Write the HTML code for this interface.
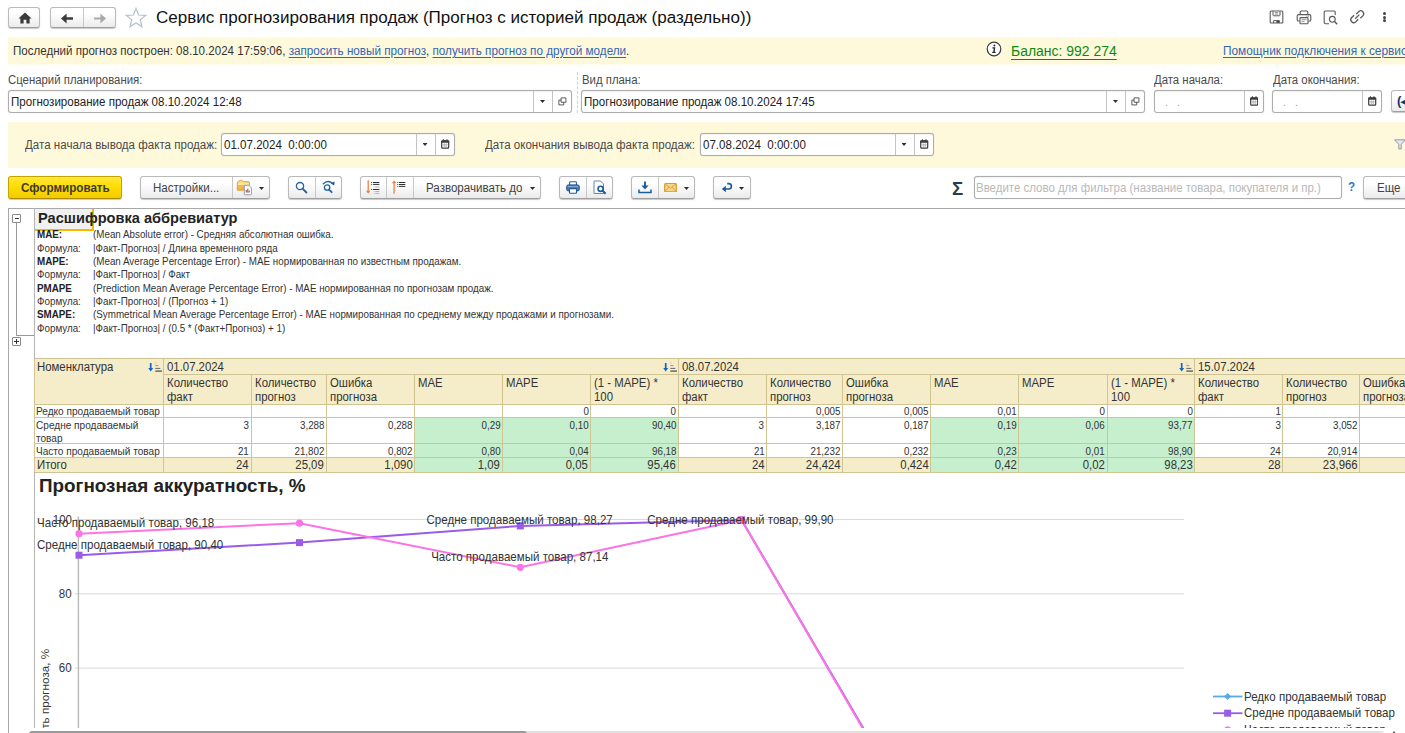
<!DOCTYPE html>
<html lang="ru">
<head>
<meta charset="utf-8">
<title>Сервис прогнозирования продаж</title>
<style>
*{box-sizing:border-box;margin:0;padding:0}
html,body{width:1405px;height:733px;overflow:hidden;background:#fff}
body{font-family:"Liberation Sans",Arial,sans-serif;font-size:11.55px;color:#333;position:relative}
.abs{position:absolute;white-space:nowrap}
.t{position:absolute;white-space:nowrap;line-height:14px;font-size:12.5px;transform:scaleX(.925);transform-origin:0 50%}
.t.s{font-size:10.9px;line-height:13px}
.t.s.n{font-size:10.6px}
.t.s.a{font-size:10.3px;transform:scaleX(.953)}
.t.m{font-size:12.3px;line-height:14px}
.tr{transform-origin:100% 50%;text-align:right}
a{color:#3266b4;text-decoration:underline}
.btn{position:absolute;border:1px solid #b9b9b9;border-bottom-color:#9f9f9f;border-radius:3px;background:linear-gradient(#ffffff 30%,#ebebeb);box-shadow:0 1px 1px rgba(0,0,0,.22)}
.btn .t{color:#424242}
.btn .sep{position:absolute;top:0;bottom:0;width:1px;background:#c8c8c8}
.inp{position:absolute;border:1px solid #adadad;border-radius:3px;background:#fff;height:22px;box-shadow:0 0 1px rgba(0,0,0,.25), inset 0 1px 1px rgba(0,0,0,.06)}
.inp .sep{position:absolute;top:0;bottom:0;width:1px;background:#c4c4c4}
.inp .v{position:absolute;left:2px;top:3.5px;line-height:14px;white-space:nowrap;color:#222;font-size:12.5px;transform:scaleX(.925);transform-origin:0 50%}
.yb{position:absolute;left:8px;right:0;background:#fff9dc}
.t.lbl{color:#4a4a4a;font-size:12.3px}
a.l2{font-size:12.65px;text-underline-offset:1.8px}
.caret{position:absolute;width:5px;height:2.9px;background:#2e2e2e;clip-path:polygon(0 0,100% 0,50% 100%)}
</style>
</head>
<body>
<!-- TITLE ROW -->
<div id="titlerow">
<div class="btn" style="left:8px;top:7px;width:32px;height:21px">
<svg class="abs" style="left:8.5px;top:4px" width="14" height="12" viewBox="0 0 13 12" preserveAspectRatio="none"><path d="M6.5 0.6 L0.4 6.4 H2.2 V11.4 H5.2 V7.8 H7.8 V11.4 H10.8 V6.4 H12.6 Z" fill="#3a3a3a"/></svg>
</div>
<div class="btn" style="left:50px;top:7px;width:66px;height:21px">
<div class="sep" style="left:32px"></div>
<svg class="abs" style="left:9px;top:4.5px" width="14" height="11" viewBox="0 0 14 11"><path d="M1 5.5 L6.6 .6 V4.3 H13 V6.7 H6.6 V10.4 Z" fill="#3c3c3c"/></svg>
<svg class="abs" style="left:41.5px;top:4.5px" width="14" height="11" viewBox="0 0 14 11"><path d="M13 5.5 L7.4 .6 V4.5 H1 V6.5 H7.4 V10.4 Z" fill="#a9a9a9"/></svg>
</div>
<svg class="abs" style="left:125.3px;top:7px" width="22" height="21" viewBox="0 0 22 21"><path d="M11 1.5 L13.7 8 L20.6 8.4 L15.3 12.8 L17 19.6 L11 15.9 L5 19.6 L6.7 12.8 L1.4 8.4 L8.3 8 Z" fill="#fff" stroke="#b7c1cc" stroke-width="1.25" stroke-linejoin="miter"/></svg>
<div class="abs" style="left:156px;top:8px;font-size:17.05px;line-height:20px;color:#111">Сервис прогнозирования продаж (Прогноз с историей продаж (раздельно))</div>
<!-- right icons -->
<svg class="abs" style="left:1268.7px;top:10px" width="15" height="14" viewBox="0 0 15 14"><path d="M2.2 1 H12.8 Q13.8 1 13.8 2 V12 Q13.8 13 12.8 13 H2.2 Q1.2 13 1.2 12 V2 Q1.2 1 2.2 1 Z" fill="none" stroke="#5a5a5a" stroke-width="1.1"/><path d="M4 1.2 V5 Q4 5.8 4.8 5.8 H10.2 Q11 5.8 11 5 V1.2" fill="none" stroke="#5a5a5a" stroke-width="1"/><path d="M5.8 2.6 H9.2 M5.8 4.1 H9.2" stroke="#777" stroke-width=".8"/><path d="M4.6 13 V10.6 H10.4 V13" fill="none" stroke="#5a5a5a" stroke-width="1"/><rect x="7.4" y="10.8" width="2.6" height="2" fill="#444"/></svg>
<svg class="abs" style="left:1296px;top:9.5px" width="16" height="15" viewBox="0 0 16 15"><path d="M4.2 4.6 V2 Q4.2 1 5.2 1 H10.8 Q11.8 1 11.8 2 V4.6" fill="none" stroke="#5a5a5a" stroke-width="1.1"/><path d="M3.8 11 H2.5 Q1.2 11 1.2 9.7 V6 Q1.2 4.6 2.5 4.6 H13.5 Q14.8 4.6 14.8 6 V9.7 Q14.8 11 13.5 11 H12.2" fill="none" stroke="#5a5a5a" stroke-width="1.1"/><rect x="4" y="7.6" width="8" height="6.2" rx=".8" fill="#fff" stroke="#5a5a5a" stroke-width="1.1"/><path d="M5.6 9.7 H10.4 M5.6 11.6 H8.6" stroke="#777" stroke-width=".8"/><path d="M10.5 6.2 H11.3 M12.3 6.2 H13.1" stroke="#555" stroke-width="1"/></svg>
<svg class="abs" style="left:1323px;top:9.5px" width="16" height="16" viewBox="0 0 16 16"><path d="M12.2 5 V2.2 Q12.2 1 11 1 H2.4 Q1.2 1 1.2 2.2 V12.6 Q1.2 13.8 2.4 13.8 H6" fill="none" stroke="#5a5a5a" stroke-width="1.1"/><circle cx="9.3" cy="9.3" r="2.9" fill="none" stroke="#5a5a5a" stroke-width="1.1"/><path d="M11.5 11.5 L14.2 14.2" stroke="#5a5a5a" stroke-width="1.4"/></svg>
<svg class="abs" style="left:1348.2px;top:8.2px" width="18.5" height="17.4" viewBox="0 0 17 16"><path d="M6.6 9.9 L10.4 6.1" stroke="#5a5a5a" stroke-width="1.2"/><path d="M7.6 5.6 L10 3.2 A2.7 2.7 0 0 1 13.8 7 L11.4 9.4" fill="none" stroke="#5a5a5a" stroke-width="1.2"/><path d="M9.4 10.4 L7 12.8 A2.7 2.7 0 0 1 3.2 9 L5.6 6.6" fill="none" stroke="#5a5a5a" stroke-width="1.2"/></svg>
<div class="abs" style="left:1383px;top:11.8px;width:3px;height:3px;border-radius:50%;background:#444"></div>
<div class="abs" style="left:1383px;top:15.6px;width:3px;height:3px;border-radius:50%;background:#444"></div>
<div class="abs" style="left:1383px;top:19.4px;width:3px;height:3px;border-radius:50%;background:#444"></div>
</div>
<!-- INFO BAR -->
<div id="infobar">
<div class="yb" style="top:37px;height:28px;background:linear-gradient(#fffcec 0,#fffcec 1px,#fff9dc 1px,#fff9dc 27px,#fffcec 27px)"></div>
<div class="t" style="left:13px;top:43.6px">Последний прогноз построен: 08.10.2024 17:59:06, <a class="l2">запросить новый прогноз</a>, <a class="l2">получить прогноз по другой модели</a>.</div>
<svg class="abs" style="left:985.5px;top:41.2px" width="16" height="16" viewBox="0 0 16 16"><circle cx="8" cy="8" r="6.8" fill="#fff" stroke="#3a3a3a" stroke-width="1.2"/><path d="M6.4 6.9 H8.5 L7.9 11.3 M6.2 11.4 H9.6" stroke="#2a2a2a" stroke-width="1.4" fill="none"/><circle cx="8.4" cy="4.6" r="1" fill="#2a2a2a"/></svg>
<div class="t" style="left:1011px;top:41.5px;font-size:15.1px;line-height:18px"><a style="color:#0c8a10;text-underline-offset:2.6px">Баланс: 992 274</a></div>
<div class="t" style="left:1223px;top:43.6px;font-size:12.82px"><a style="text-underline-offset:1.8px">Помощник подключения к сервису прогнозирования</a></div>
</div>
<!-- FIELDS -->
<div id="fields">
<div class="t lbl" style="left:7.5px;top:73px">Сценарий планирования:</div>
<div class="t lbl" style="left:581.5px;top:73px">Вид плана:</div>
<div class="t lbl" style="left:1154px;top:73px">Дата начала:</div>
<div class="t lbl" style="left:1272.5px;top:73px">Дата окончания:</div>
<div class="inp" style="left:8px;top:90px;width:564px;height:23px"><div class="v" style="top:4px">Прогнозирование продаж 08.10.2024 12:48</div><div class="sep" style="left:524px"></div><div class="sep" style="left:543px"></div><div class="caret" style="left:531px;top:9px"></div><svg class="abs" style="left:549px;top:6.3px" width="8.8" height="8.8" viewBox="0 0 10 10"><path d="M3.5 1 H9 V6 H3.5 Z" fill="#fff" stroke="#444" stroke-width="1"/><path d="M3.5 3.5 H1 V9 H6.5 V6" fill="none" stroke="#444" stroke-width="1"/></svg></div>
<div class="abs" style="left:576.5px;top:72px;height:41px;width:0;border-left:1px dashed #d2d2d2"></div>
<div class="inp" style="left:581px;top:90px;width:564px;height:23px"><div class="v" style="top:4px">Прогнозирование продаж 08.10.2024 17:45</div><div class="sep" style="left:524px"></div><div class="sep" style="left:543px"></div><div class="caret" style="left:531px;top:9px"></div><svg class="abs" style="left:549px;top:6.3px" width="8.8" height="8.8" viewBox="0 0 10 10"><path d="M3.5 1 H9 V6 H3.5 Z" fill="#fff" stroke="#444" stroke-width="1"/><path d="M3.5 3.5 H1 V9 H6.5 V6" fill="none" stroke="#444" stroke-width="1"/></svg></div>
<div class="inp" style="left:1154px;top:90px;width:110px;height:23px"><div class="v" style="left:9.5px;top:4px;color:#a59a8a;font-size:11.7px">.&nbsp;&nbsp;&nbsp;.</div><div class="sep" style="left:89px"></div><svg class="abs" style="left:94.8px;top:5px" width="8.4" height="10" viewBox="0 0 8.4 10"><rect x=".7" y="1.9" width="7" height="7.3" rx=".9" fill="#fff" stroke="#3c3c3c" stroke-width="1.2"/><rect x=".2" y="1.4" width="8" height="2.4" rx=".6" fill="#3c3c3c"/><path d="M2.4 .2 V1.8 M6 .2 V1.8" stroke="#3c3c3c" stroke-width="1.1"/><path d="M1.6 5.9 H6.8 M3.2 4.3 V8.6 M5.2 4.3 V8.6" stroke="#9a9a9a" stroke-width=".7"/></svg></div>
<div class="inp" style="left:1272px;top:90px;width:110px;height:23px"><div class="v" style="left:9.5px;top:4px;color:#a59a8a;font-size:11.7px">.&nbsp;&nbsp;&nbsp;.</div><div class="sep" style="left:89px"></div><svg class="abs" style="left:95.3px;top:5px" width="8.4" height="10" viewBox="0 0 8.4 10"><rect x=".7" y="1.9" width="7" height="7.3" rx=".9" fill="#fff" stroke="#3c3c3c" stroke-width="1.2"/><rect x=".2" y="1.4" width="8" height="2.4" rx=".6" fill="#3c3c3c"/><path d="M2.4 .2 V1.8 M6 .2 V1.8" stroke="#3c3c3c" stroke-width="1.1"/><path d="M1.6 5.9 H6.8 M3.2 4.3 V8.6 M5.2 4.3 V8.6" stroke="#9a9a9a" stroke-width=".7"/></svg></div>
<div class="btn" style="left:1391px;top:90px;width:40px;height:22px"><div class="abs" style="left:5px;top:2px;font-weight:700;font-size:13px;line-height:16px;color:#123a6b">(<span style="font-family:'DejaVu Sans',sans-serif;font-size:11px;margin-left:-1px">◂</span></div></div>
</div>
<!-- BAND2 -->
<div id="band2">
<div class="yb" style="top:122px;height:45.5px"></div>
<div class="t lbl" style="left:24.5px;top:138px;font-size:12.5px">Дата начала вывода факта продаж:</div>
<div class="inp" style="left:221px;top:133px;width:234px;height:23px"><div class="v" style="top:4px">01.07.2024&nbsp; 0:00:00</div><div class="sep" style="left:194px"></div><div class="sep" style="left:213px"></div><div class="caret" style="left:200.5px;top:9px"></div><svg class="abs" style="left:219.3px;top:5px" width="8.4" height="10" viewBox="0 0 8.4 10"><rect x=".7" y="1.9" width="7" height="7.3" rx=".9" fill="#fff" stroke="#3c3c3c" stroke-width="1.2"/><rect x=".2" y="1.4" width="8" height="2.4" rx=".6" fill="#3c3c3c"/><path d="M2.4 .2 V1.8 M6 .2 V1.8" stroke="#3c3c3c" stroke-width="1.1"/><path d="M1.6 5.9 H6.8 M3.2 4.3 V8.6 M5.2 4.3 V8.6" stroke="#9a9a9a" stroke-width=".7"/></svg></div>
<div class="t lbl" style="left:485px;top:138px;font-size:12.5px">Дата окончания вывода факта продаж:</div>
<div class="inp" style="left:700px;top:133px;width:234px;height:23px"><div class="v" style="top:4px">07.08.2024&nbsp; 0:00:00</div><div class="sep" style="left:194px"></div><div class="sep" style="left:213px"></div><div class="caret" style="left:200.5px;top:9px"></div><svg class="abs" style="left:219.3px;top:5px" width="8.4" height="10" viewBox="0 0 8.4 10"><rect x=".7" y="1.9" width="7" height="7.3" rx=".9" fill="#fff" stroke="#3c3c3c" stroke-width="1.2"/><rect x=".2" y="1.4" width="8" height="2.4" rx=".6" fill="#3c3c3c"/><path d="M2.4 .2 V1.8 M6 .2 V1.8" stroke="#3c3c3c" stroke-width="1.1"/><path d="M1.6 5.9 H6.8 M3.2 4.3 V8.6 M5.2 4.3 V8.6" stroke="#9a9a9a" stroke-width=".7"/></svg></div>
<svg class="abs" style="left:1394px;top:139px" width="12" height="11" viewBox="0 0 12 11"><path d="M.6 .8 H11.4 L7.2 5.4 V10 L4.8 10 V5.4 Z" fill="#e4e8ee" stroke="#8f9aa8" stroke-width="1"/></svg>
</div>
<!-- TOOLBAR -->
<div id="toolbar">
<div class="btn" style="left:8px;top:176px;width:114px;height:23px;background:linear-gradient(#ffe838,#fddc00 50%,#f4ca00);border-color:#c4a300 #c4a300 #a98c00"><div class="t" style="left:11.5px;top:4px;font-weight:700;color:#403a28;font-size:12.6px">Сформировать</div></div>
<div class="btn" style="left:140px;top:176px;width:130px;height:23px"><div class="t" style="left:11.5px;top:4px">Настройки...</div><div class="sep" style="left:91px"></div>
<svg class="abs" style="left:94.5px;top:2px" width="17" height="17" viewBox="0 0 17 17"><defs><linearGradient id="fg" x1="0" y1="0" x2="0" y2="1"><stop offset="0" stop-color="#f7d77c"/><stop offset=".45" stop-color="#fbe6a4"/><stop offset=".5" stop-color="#f1bd4c"/><stop offset="1" stop-color="#eeb43c"/></linearGradient></defs><path d="M1.3 4 Q1.3 2.6 2.7 2.1 L4.4 1.4 Q5.6 1 6.6 1.8 L7.6 2.6 H12.2 Q13.4 2.6 13.4 3.8 V11.2 H1.3 Z" fill="url(#fg)" stroke="#d79c2c" stroke-width=".9"/><path d="M8.3 6.3 H12.8 L15.4 8.9 V15.2 Q15.4 15.8 14.8 15.8 H8.9 Q8.3 15.8 8.3 15.2 Z" fill="#fff" stroke="#7f97ae" stroke-width=".9"/><path d="M10.4 13.6 V11" stroke="#e0524c" stroke-width="1.3"/><path d="M11.8 13.6 V9.8" stroke="#4a9c4a" stroke-width="1.3"/><path d="M13.2 13.6 V11.4" stroke="#e0524c" stroke-width="1.3"/></svg>
<div class="caret" style="left:118px;top:10px"></div></div>
<div class="btn" style="left:288px;top:176px;width:54px;height:23px"><div class="sep" style="left:26px"></div>
<svg class="abs" style="left:6px;top:4px" width="13" height="13" viewBox="0 0 13 13"><circle cx="5" cy="5.1" r="3.6" fill="none" stroke="#24649f" stroke-width="1.3"/><path d="M7.6 7.7 L11.4 11.5" stroke="#24649f" stroke-width="1.9" stroke-linecap="round"/></svg>
<svg class="abs" style="left:32px;top:3px" width="15" height="15" viewBox="0 0 15 15"><circle cx="6.1" cy="7.5" r="2.7" fill="none" stroke="#24649f" stroke-width="1.3"/><path d="M8 9.6 L10.7 12.2" stroke="#24649f" stroke-width="1.8" stroke-linecap="round"/><path d="M1.8 4.2 Q6.6 -.6 11.6 3.2" fill="none" stroke="#24649f" stroke-width="1.3"/><path d="M13.6 1.6 L13.2 5.6 L9.9 3.4 Z" fill="#174f86"/></svg>
</div>
<div class="btn" style="left:360px;top:176px;width:181px;height:23px"><div class="sep" style="left:25px"></div><div class="sep" style="left:52px"></div>
<svg class="abs" style="left:4px;top:2px" width="16" height="16" viewBox="0 0 16 16"><path d="M3.2 1.2 V12.5" stroke="#f07f3c" stroke-width="1.3"/><path d="M1 11.8 H5.4 L3.2 14.8 Z" fill="#f07f3c"/><path d="M6.2 3.5 H7.1 M8 3.5 H14.4 M6.2 5.4 H7.1 M8 5.4 H14.4 M6.2 10.5 H7.1 M8 10.5 H14.4" stroke="#2f2f2f" stroke-width="1"/><path d="M8.7 8 H9.4 M10.2 8 H14.4 M8.7 12.5 H9.4 M10.2 12.5 H14.4 M8.7 14.4 H9.4 M10.2 14.4 H14.4" stroke="#b4b4b4" stroke-width="1"/></svg>
<svg class="abs" style="left:30px;top:2px" width="16" height="16" viewBox="0 0 16 16"><path d="M3.1 3.5 V14.7" stroke="#f07f3c" stroke-width="1.3"/><path d="M.9 4.3 H5.3 L3.1 1.3 Z" fill="#f07f3c"/><path d="M6.4 3.5 H7.2 M7.9 3.5 H14.3 M6.4 5.5 H7.2 M7.9 5.5 H14.3 M6.4 7.4 H7.2 M7.9 7.4 H14.3" stroke="#2f2f2f" stroke-width="1"/></svg>
<div class="t" style="left:65px;top:4px">Разворачивать до</div><div class="caret" style="left:169px;top:10px"></div></div>
<div class="btn" style="left:559px;top:176px;width:54px;height:23px"><div class="sep" style="left:26px"></div>
<svg class="abs" style="left:5.5px;top:4px" width="14" height="13" viewBox="0 0 14 13"><path d="M3.6 4 V1.4 Q3.6 .7 4.3 .7 H9.7 Q10.4 .7 10.4 1.4 V4" fill="#fff" stroke="#2b5f95" stroke-width="1.1"/><rect x=".7" y="3.9" width="12.6" height="6" rx="1.6" fill="#4a7db1" stroke="#24598f" stroke-width="1"/><path d="M2 5.6 H12" stroke="#8fb2d4" stroke-width=".9"/><rect x="3.5" y="7.6" width="7" height="4.7" rx=".6" fill="#fff" stroke="#24598f" stroke-width="1.1"/></svg>
<svg class="abs" style="left:33px;top:3px" width="14" height="16" viewBox="0 0 14 16"><path d="M1 1 H7.5 L10.5 4 V13.5 H1 Z" fill="#fff" stroke="#6b86a5" stroke-width="1"/><circle cx="7.6" cy="8.8" r="2.6" fill="#fff" stroke="#1d5c9a" stroke-width="1.6"/><path d="M9.6 10.8 L12.6 13.8" stroke="#1d5c9a" stroke-width="2"/></svg>
</div>
<div class="btn" style="left:631px;top:176px;width:64px;height:23px"><div class="sep" style="left:26px"></div>
<svg class="abs" style="left:6px;top:4px" width="14" height="13" viewBox="0 0 14 13"><path d="M7 .5 V7" stroke="#1d5c9a" stroke-width="1.9"/><path d="M3.4 4.6 L7 8.6 L10.6 4.6 Z" fill="#1d5c9a"/><path d="M1 8.5 V11.5 H13 V8.5" fill="none" stroke="#1d5c9a" stroke-width="1.5"/></svg>
<svg class="abs" style="left:31.5px;top:6px" width="13" height="9.4" viewBox="0 0 14 11" preserveAspectRatio="none"><rect x=".7" y=".7" width="12.6" height="9.6" rx="1" fill="#f6d48a" stroke="#d49a2a" stroke-width="1.2"/><path d="M1.2 1.2 L7 6 L12.8 1.2 M1.2 9.8 L5.3 4.8 M12.8 9.8 L8.7 4.8" fill="none" stroke="#d49a2a" stroke-width=".9"/></svg>
<div class="caret" style="left:52px;top:10px"></div></div>
<div class="btn" style="left:713px;top:176px;width:38px;height:23px">
<svg class="abs" style="left:7px;top:5px" width="12.4" height="11.4" viewBox="0 0 13 13"><path d="M3 8 H8.2 A3.1 3.1 0 0 0 8.2 1.8 H6.5" fill="none" stroke="#1d5c9a" stroke-width="1.9"/><path d="M.4 8 L5 4.2 V11.8 Z" fill="#1d5c9a"/></svg>
<div class="caret" style="left:25px;top:10px"></div></div>
<div class="abs" style="left:951.5px;top:178px;font-size:18px;line-height:22px;color:#2a3b4d;font-weight:700;transform:scaleX(1.04);transform-origin:0 50%">Σ</div>
<div class="inp" style="left:974px;top:176px;width:368px;height:23px;border-radius:3px"><div class="v" style="top:4px;left:1px;color:#b9b9b9;font-size:12.4px">Введите слово для фильтра (название товара, покупателя и пр.)</div></div>
<div class="t" style="left:1348px;top:180px;font-weight:700;color:#2479c9">?</div>
<div class="btn" style="left:1363px;top:176px;width:60px;height:23px"><div class="t" style="left:12.5px;top:4px">Еще</div></div>
</div>
<!-- REPORT -->
<div id="report">
<div class="abs" style="left:8px;top:208px;width:1400px;height:1px;background:#a8a8a8"></div>
<div class="abs" style="left:8px;top:208px;width:1px;height:530px;background:#a8a8a8"></div>
<div class="abs" style="left:34px;top:208px;width:1px;height:519.5px;background:#b4b4b4"></div>
<div class="abs" style="left:16px;top:222px;width:1px;height:113px;background:#9a9a9a"></div>
<div class="abs" style="left:16px;top:334.5px;width:18px;height:1px;background:#9a9a9a"></div>
<div class="abs" style="left:12px;top:214px;width:9px;height:9px;border:1px solid #8a8a8a;background:#fff;border-radius:1px"><div class="abs" style="left:1.5px;top:3px;width:4px;height:1px;background:#333"></div></div>
<div class="abs" style="left:12px;top:337px;width:9px;height:9px;border:1px solid #8a8a8a;background:#fff;border-radius:1px"><div class="abs" style="left:1px;top:3px;width:5px;height:1px;background:#333"></div><div class="abs" style="left:3px;top:1px;width:1px;height:5px;background:#333"></div></div>
<div class="abs" style="left:35px;top:208.5px;width:58.5px;height:22px;background:#f1f1f1;border-right:2px solid #f6b900;border-bottom:2px solid #f6b900"></div>
<div class="abs" style="left:38px;top:209.5px;font-size:14.6px;line-height:17px;font-weight:700;color:#222">Расшифровка аббревиатур</div>
<div class="t s a" style="left:37px;top:228.3px;font-weight:700;color:#222;">MAE:</div>
<div class="t s a" style="left:93px;top:228.3px">(Mean Absolute error) - Средняя абсолютная ошибка.</div>
<div class="t s a" style="left:37px;top:241.6px;">Формула:</div>
<div class="t s a" style="left:93px;top:241.6px">|Факт-Прогноз| / Длина временного ряда</div>
<div class="t s a" style="left:37px;top:255.0px;font-weight:700;color:#222;">MAPE:</div>
<div class="t s a" style="left:93px;top:255.0px">(Mean Average Percentage Error) - MAE нормированная по известным продажам.</div>
<div class="t s a" style="left:37px;top:268.3px;">Формула:</div>
<div class="t s a" style="left:93px;top:268.3px">|Факт-Прогноз| / Факт</div>
<div class="t s a" style="left:37px;top:281.6px;font-weight:700;color:#222;">PMAPE</div>
<div class="t s a" style="left:93px;top:281.6px">(Prediction Mean Average Percentage Error) - MAE нормированная по прогнозам продаж.</div>
<div class="t s a" style="left:37px;top:295.0px;">Формула:</div>
<div class="t s a" style="left:93px;top:295.0px">|Факт-Прогноз| / (Прогноз + 1)</div>
<div class="t s a" style="left:37px;top:308.3px;font-weight:700;color:#222;">SMAPE:</div>
<div class="t s a" style="left:93px;top:308.3px">(Symmetrical Mean Average Percentage Error) - MAE нормированная по среднему между продажами и прогнозами.</div>
<div class="t s a" style="left:37px;top:321.6px;">Формула:</div>
<div class="t s a" style="left:93px;top:321.6px">|Факт-Прогноз| / (0.5 * (Факт+Прогноз) + 1)</div>
<div class="abs" style="left:34.5px;top:358.5px;width:1400px;height:45.8px;background:#f5edc9"></div>
<div class="abs" style="left:34.5px;top:457.2px;width:1400px;height:15.1px;background:#f5edc9"></div>
<div class="abs" style="left:414px;top:417.3px;width:264px;height:55.0px;background:#c6efce"></div>
<div class="abs" style="left:930px;top:417.3px;width:264px;height:55.0px;background:#c6efce"></div>
<div class="abs" style="left:34.5px;top:358.0px;width:1400px;height:1px;background:#cfc492"></div>
<div class="abs" style="left:163.4px;top:373.7px;width:1300px;height:1px;background:#cfc492"></div>
<div class="abs" style="left:34.5px;top:403.8px;width:1400px;height:1px;background:#cfc492"></div>
<div class="abs" style="left:34.5px;top:416.8px;width:1400px;height:1px;background:#cfc492"></div>
<div class="abs" style="left:34.5px;top:442.9px;width:1400px;height:1px;background:#cfc492"></div>
<div class="abs" style="left:34.5px;top:456.7px;width:1400px;height:1px;background:#cfc492"></div>
<div class="abs" style="left:34.5px;top:471.8px;width:1400px;height:1px;background:#cfc492"></div>
<div class="abs" style="left:34px;top:358.5px;width:1px;height:113.8px;background:#cfc492"></div>
<div class="abs" style="left:163px;top:358.5px;width:1px;height:113.8px;background:#cfc492"></div>
<div class="abs" style="left:251px;top:374.2px;width:1px;height:98.1px;background:#cfc492"></div>
<div class="abs" style="left:326px;top:374.2px;width:1px;height:98.1px;background:#cfc492"></div>
<div class="abs" style="left:414px;top:374.2px;width:1px;height:98.1px;background:#cfc492"></div>
<div class="abs" style="left:502px;top:374.2px;width:1px;height:98.1px;background:#cfc492"></div>
<div class="abs" style="left:590px;top:374.2px;width:1px;height:98.1px;background:#cfc492"></div>
<div class="abs" style="left:678px;top:358.5px;width:1px;height:113.8px;background:#cfc492"></div>
<div class="abs" style="left:766px;top:374.2px;width:1px;height:98.1px;background:#cfc492"></div>
<div class="abs" style="left:842px;top:374.2px;width:1px;height:98.1px;background:#cfc492"></div>
<div class="abs" style="left:930px;top:374.2px;width:1px;height:98.1px;background:#cfc492"></div>
<div class="abs" style="left:1018px;top:374.2px;width:1px;height:98.1px;background:#cfc492"></div>
<div class="abs" style="left:1107px;top:374.2px;width:1px;height:98.1px;background:#cfc492"></div>
<div class="abs" style="left:1194px;top:358.5px;width:1px;height:113.8px;background:#cfc492"></div>
<div class="abs" style="left:1282px;top:374.2px;width:1px;height:98.1px;background:#cfc492"></div>
<div class="abs" style="left:1359px;top:374.2px;width:1px;height:98.1px;background:#cfc492"></div>
<div class="t m" style="left:36.8px;top:360px">Номенклатура</div>
<svg class="abs" style="left:147.8px;top:362px" width="14" height="11" viewBox="0 0 14 11"><path d="M2.7 1 V7" stroke="#1565c0" stroke-width="1.7"/><path d="M.2 6 L2.7 9.6 L5.2 6 Z" fill="#1565c0"/><path d="M7.3 1 H8.3" stroke="#aaa" stroke-width=".8"/><path d="M7.3 3.6 H10.3" stroke="#888" stroke-width=".9"/><path d="M7.3 6.4 H12.3" stroke="#666" stroke-width="1"/><path d="M7.3 9.1 H14" stroke="#555" stroke-width="1.3"/></svg>
<div class="t m" style="left:166.7px;top:360px">01.07.2024</div>
<svg class="abs" style="left:662.8px;top:362px" width="14" height="11" viewBox="0 0 14 11"><path d="M2.7 1 V7" stroke="#1565c0" stroke-width="1.7"/><path d="M.2 6 L2.7 9.6 L5.2 6 Z" fill="#1565c0"/><path d="M7.3 1 H8.3" stroke="#aaa" stroke-width=".8"/><path d="M7.3 3.6 H10.3" stroke="#888" stroke-width=".9"/><path d="M7.3 6.4 H12.3" stroke="#666" stroke-width="1"/><path d="M7.3 9.1 H14" stroke="#555" stroke-width="1.3"/></svg>
<div class="t m" style="left:166.7px;top:376.3px">Количество</div>
<div class="t m" style="left:166.7px;top:389.9px">факт</div>
<div class="t m" style="left:254.6px;top:376.3px">Количество</div>
<div class="t m" style="left:254.6px;top:389.9px">прогноз</div>
<div class="t m" style="left:329.7px;top:376.3px">Ошибка</div>
<div class="t m" style="left:329.7px;top:389.9px">прогноза</div>
<div class="t m" style="left:417.8px;top:376.3px">MAE</div>
<div class="t m" style="left:505.9px;top:376.3px">MAPE</div>
<div class="t m" style="left:593.9px;top:376.3px">(1 - MAPE) *</div>
<div class="t m" style="left:593.9px;top:389.9px">100</div>
<div class="t m" style="left:681.7px;top:360px">08.07.2024</div>
<svg class="abs" style="left:1179.1px;top:362px" width="14" height="11" viewBox="0 0 14 11"><path d="M2.7 1 V7" stroke="#1565c0" stroke-width="1.7"/><path d="M.2 6 L2.7 9.6 L5.2 6 Z" fill="#1565c0"/><path d="M7.3 1 H8.3" stroke="#aaa" stroke-width=".8"/><path d="M7.3 3.6 H10.3" stroke="#888" stroke-width=".9"/><path d="M7.3 6.4 H12.3" stroke="#666" stroke-width="1"/><path d="M7.3 9.1 H14" stroke="#555" stroke-width="1.3"/></svg>
<div class="t m" style="left:681.7px;top:376.3px">Количество</div>
<div class="t m" style="left:681.7px;top:389.9px">факт</div>
<div class="t m" style="left:769.8px;top:376.3px">Количество</div>
<div class="t m" style="left:769.8px;top:389.9px">прогноз</div>
<div class="t m" style="left:846.0px;top:376.3px">Ошибка</div>
<div class="t m" style="left:846.0px;top:389.9px">прогноза</div>
<div class="t m" style="left:934.0px;top:376.3px">MAE</div>
<div class="t m" style="left:1022.2px;top:376.3px">MAPE</div>
<div class="t m" style="left:1110.5px;top:376.3px">(1 - MAPE) *</div>
<div class="t m" style="left:1110.5px;top:389.9px">100</div>
<div class="t m" style="left:1198.0px;top:360px">15.07.2024</div>
<div class="t m" style="left:1198.0px;top:376.3px">Количество</div>
<div class="t m" style="left:1198.0px;top:389.9px">факт</div>
<div class="t m" style="left:1286.2px;top:376.3px">Количество</div>
<div class="t m" style="left:1286.2px;top:389.9px">прогноз</div>
<div class="t m" style="left:1362.8px;top:376.3px">Ошибка</div>
<div class="t m" style="left:1362.8px;top:389.9px">прогноза</div>
<div class="t s" style="left:36.2px;top:405.3px">Редко продаваемый товар</div>
<div class="t s" style="left:36.2px;top:419px">Средне продаваемый</div>
<div class="t s" style="left:36.2px;top:431.8px">товар</div>
<div class="t s" style="left:36.2px;top:444.7px">Часто продаваемый товар</div>
<div class="t m" style="left:36.5px;top:458.2px">Итого</div>
<div class="t tr s n" style="right:816.6px;top:405.3px">0</div>
<div class="t tr s n" style="right:728.8px;top:405.3px">0</div>
<div class="t tr s n" style="right:564.5px;top:405.3px">0,005</div>
<div class="t tr s n" style="right:476.5px;top:405.3px">0,005</div>
<div class="t tr s n" style="right:388.3px;top:405.3px">0,01</div>
<div class="t tr s n" style="right:300.0px;top:405.3px">0</div>
<div class="t tr s n" style="right:212.5px;top:405.3px">0</div>
<div class="t tr s n" style="right:124.3px;top:405.3px">1</div>
<div class="t tr s n" style="right:1155.9px;top:419px">3</div>
<div class="t tr s n" style="right:1080.8px;top:419px">3,288</div>
<div class="t tr s n" style="right:992.7px;top:419px">0,288</div>
<div class="t tr s n" style="right:904.6px;top:419px">0,29</div>
<div class="t tr s n" style="right:816.6px;top:419px">0,10</div>
<div class="t tr s n" style="right:728.8px;top:419px">90,40</div>
<div class="t tr s n" style="right:640.7px;top:419px">3</div>
<div class="t tr s n" style="right:564.5px;top:419px">3,187</div>
<div class="t tr s n" style="right:476.5px;top:419px">0,187</div>
<div class="t tr s n" style="right:388.3px;top:419px">0,19</div>
<div class="t tr s n" style="right:300.0px;top:419px">0,06</div>
<div class="t tr s n" style="right:212.5px;top:419px">93,77</div>
<div class="t tr s n" style="right:124.3px;top:419px">3</div>
<div class="t tr s n" style="right:47.7px;top:419px">3,052</div>
<div class="t tr s n" style="right:1155.9px;top:444.7px">21</div>
<div class="t tr s n" style="right:1080.8px;top:444.7px">21,802</div>
<div class="t tr s n" style="right:992.7px;top:444.7px">0,802</div>
<div class="t tr s n" style="right:904.6px;top:444.7px">0,80</div>
<div class="t tr s n" style="right:816.6px;top:444.7px">0,04</div>
<div class="t tr s n" style="right:728.8px;top:444.7px">96,18</div>
<div class="t tr s n" style="right:640.7px;top:444.7px">21</div>
<div class="t tr s n" style="right:564.5px;top:444.7px">21,232</div>
<div class="t tr s n" style="right:476.5px;top:444.7px">0,232</div>
<div class="t tr s n" style="right:388.3px;top:444.7px">0,23</div>
<div class="t tr s n" style="right:300.0px;top:444.7px">0,01</div>
<div class="t tr s n" style="right:212.5px;top:444.7px">98,90</div>
<div class="t tr s n" style="right:124.3px;top:444.7px">24</div>
<div class="t tr s n" style="right:47.7px;top:444.7px">20,914</div>
<div class="t tr m" style="right:1155.9px;top:458.2px">24</div>
<div class="t tr m" style="right:1080.8px;top:458.2px">25,09</div>
<div class="t tr m" style="right:992.7px;top:458.2px">1,090</div>
<div class="t tr m" style="right:904.6px;top:458.2px">1,09</div>
<div class="t tr m" style="right:816.6px;top:458.2px">0,05</div>
<div class="t tr m" style="right:728.8px;top:458.2px">95,46</div>
<div class="t tr m" style="right:640.7px;top:458.2px">24</div>
<div class="t tr m" style="right:564.5px;top:458.2px">24,424</div>
<div class="t tr m" style="right:476.5px;top:458.2px">0,424</div>
<div class="t tr m" style="right:388.3px;top:458.2px">0,42</div>
<div class="t tr m" style="right:300.0px;top:458.2px">0,02</div>
<div class="t tr m" style="right:212.5px;top:458.2px">98,23</div>
<div class="t tr m" style="right:124.3px;top:458.2px">28</div>
<div class="t tr m" style="right:47.7px;top:458.2px">23,966</div>
<div class="abs" style="left:39px;top:475px;font-size:17.6px;line-height:22px;font-weight:700;color:#222;transform:scaleX(1.071);transform-origin:0 50%">Прогнозная аккуратность, %</div>
<svg class="abs" style="left:35px;top:500px" width="1370" height="227.5" viewBox="35 500 1370 227.5" font-family="Liberation Sans, sans-serif"><path d="M74.8 519.5 H1184" stroke="#d9d9d9" stroke-width="1"/><path d="M74.8 593.8 H1184" stroke="#d9d9d9" stroke-width="1"/><path d="M74.8 668.1 H1184" stroke="#d9d9d9" stroke-width="1"/><path d="M78.4 516.5 V728" stroke="#b9b9b9" stroke-width="1.4"/><polyline points="79,555.2 299.5,542.6 520.3,525.9 741.6,519.9 962.5,898" fill="none" stroke="#9a5ce8" stroke-width="2" stroke-linejoin="round"/><polyline points="79,533.7 299.5,523.2 520.3,567.3 741.6,519.9 962.5,900" fill="none" stroke="#fb74e6" stroke-width="2" stroke-linejoin="round"/><rect x="75.5" y="551.7" width="7" height="7" fill="#9a5ce8"/><rect x="296.0" y="539.1" width="7" height="7" fill="#9a5ce8"/><rect x="516.8" y="522.4" width="7" height="7" fill="#9a5ce8"/><rect x="738.1" y="516.4" width="7" height="7" fill="#9a5ce8"/><circle cx="79" cy="533.7" r="3.6" fill="#fb74e6"/><circle cx="299.5" cy="523.2" r="3.6" fill="#fb74e6"/><circle cx="520.3" cy="567.3" r="3.6" fill="#fb74e6"/><circle cx="741.6" cy="519.9" r="3.6" fill="#fb74e6"/><text transform="translate(37 526.8) scale(.925 1)" font-size="12.5" fill="#333" text-anchor="start">Часто продаваемый товар, 96,18</text><text transform="translate(37 549) scale(.925 1)" font-size="12.5" fill="#333" text-anchor="start">Средне продаваемый товар, 90,40</text><text transform="translate(519.6 523.9) scale(.925 1)" font-size="12.5" fill="#333" text-anchor="middle">Средне продаваемый товар, 98,27</text><text transform="translate(519.8 560.9) scale(.925 1)" font-size="12.5" fill="#333" text-anchor="middle">Часто продаваемый товар, 87,14</text><text transform="translate(740.4 523.9) scale(.925 1)" font-size="12.5" fill="#333" text-anchor="middle">Средне продаваемый товар, 99,90</text><text transform="translate(72 523.7) scale(.925 1)" font-size="12.5" fill="#333" text-anchor="end">100</text><text transform="translate(71.7 598) scale(.925 1)" font-size="12.5" fill="#333" text-anchor="end">80</text><text transform="translate(71.7 672.3) scale(.925 1)" font-size="12.5" fill="#333" text-anchor="end">60</text><text transform="translate(49 648.8) rotate(-90) scale(1.065 1)" font-size="11" fill="#333" text-anchor="end">Аккуратность прогноза, %</text><path d="M1213 696.5 H1242.5" stroke="#5aaae8" stroke-width="1.8"/><path d="M1227.6 692.9 l3.6 3.6 l-3.6 3.6 l-3.6 -3.6 Z" fill="#5aaae8"/><text transform="translate(1244 700.7) scale(.925 1)" font-size="12.5" fill="#333" text-anchor="start">Редко продаваемый товар</text><path d="M1213 713.2 H1242.5" stroke="#9a5ce8" stroke-width="1.8"/><rect x="1224.1" y="709.7" width="7" height="7" fill="#9a5ce8"/><text transform="translate(1244 717.4000000000001) scale(.925 1)" font-size="12.5" fill="#333" text-anchor="start">Средне продаваемый товар</text><path d="M1213 729.9 H1242.5" stroke="#fb74e6" stroke-width="1.8"/><circle cx="1227.6" cy="729.9" r="3.6" fill="#fb74e6"/><text transform="translate(1244 734.1) scale(.925 1)" font-size="12.5" fill="#333" text-anchor="start">Часто продаваемый товар</text></svg>
<div class="abs" style="left:29px;top:731px;width:1355px;height:6px;background:#e2e2e2;border-radius:3px"></div>
<div class="abs" style="left:29px;top:731px;width:498px;height:6px;background:#9a9a9a;border-radius:3px"></div>
<div class="abs" style="left:1391px;top:731px;width:0;height:0;border-left:3px solid transparent;border-right:3px solid transparent;border-bottom:4px solid #555"></div>
</div>
</body>
</html>
